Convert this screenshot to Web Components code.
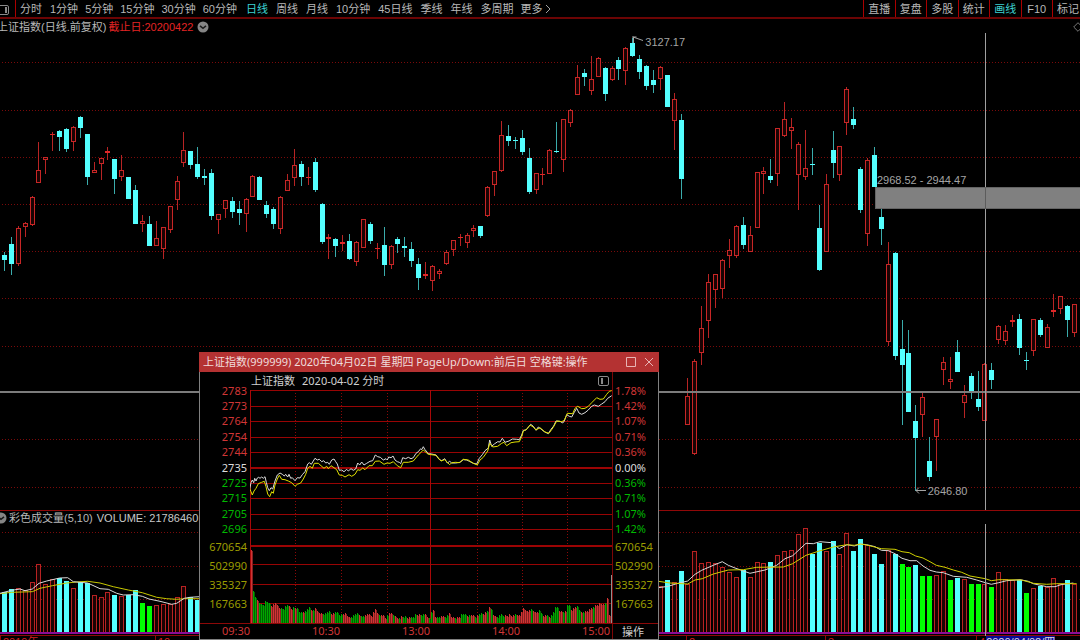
<!DOCTYPE html>
<html lang="zh-CN">
<head>
<meta charset="utf-8">
<title>上证指数 日线</title>
<style>
  html, body { margin: 0; height: 100%; background: #000; overflow: hidden; }
  body {
    --ui: "Liberation Sans", "Noto Sans CJK SC", sans-serif;
    --num: "Noto Sans", "Noto Sans CJK SC", sans-serif;
    font: 11px/16px var(--ui);
    color: #b8b8b8;
  }
</style>
</head>
<body>
<market-page></market-page>

<script>
const STEP = 6.905, FIRST = 4.4;
const columnX = i => Math.floor(FIRST + i * STEP);

/* Daily candles: direction, high, body top, body bottom, low (thirds of a pixel) */
const CANDLES = `c757 766 779 814,c712 732 792 824,r677 685 792 797,r667 668 681 711,r589 590 676 678,r427 511 548 548,
r470 471 480 521,r397 401 405 454,c391 392 410 454,c384 386 446 456,r379 381 427 454,c348 351 383 413,c403 403 532 554,
r485 511 518 518,r473 473 491 540,r441 452 458 480,c476 476 536 581,r465 511 530 543,c532 532 596 596,c554 570 671 673,
r646 664 672 695,c649 673 738 738,r663 715 738 738,r682 682 748 776,r617 619 689 698,r528 544 599 629,r397 451 488 500,
c454 454 494 507,c441 492 530 538,c507 527 535 556,c506 519 647 659,r641 641 659 703,r601 601 626 654,c592 603 635 654,
c603 627 638 676,r593 598 641 695,r526 528 590 592,c529 530 600 601,c603 614 641 654,c622 627 671 686,r587 590 686 703,
r522 541 573 573,r448 495 535 559,c484 492 530 557,r502 530 535 556,c473 487 570 575,c610 611 725 733,r703 711 718 776,
c714 717 738 770,r706 726 732 754,c703 722 777 779,r722 727 785 797,r658 658 743 743,c667 673 722 733,r728 743 748 776,
c682 736 795 827,r736 737 795 808,c711 717 733 760,c712 737 743 770,c725 746 782 800,c774 793 833 871,r787 822 827 836,
r796 797 842 873,r806 814 822 838,r749 755 792 795,r719 721 749 767,r701 711 714 739,r700 704 729 744,r676 685 692 711,
c679 679 709 713,r557 562 649 652,r514 514 554 587,r362 406 513 517,c376 408 423 437,c410 421 424 448,c391 414 457 464,
c443 473 576 581,r519 520 569 581,r505 521 526 554,r448 449 523 523,c367 452 457 459,r356 357 479 516,r328 331 369 382,
r194 230 286 286,c206 218 232 259,r169 236 272 285,r172 173 230 230,c202 203 281 302,r197 203 239 242,c172 181 207 240,
r142 143 212 256,c115 129 167 172,c164 178 216 237,c196 199 259 269,c210 240 256 280,r199 200 238 269,c226 226 322 322,
r279 298 364 451,c343 361 536 598,r1134 1189 1274 1274,r1078 1084 1363 1364,r918 985 1060 1096,r822 847 962 1014,
r823 823 870 924,r778 780 868 893,r717 751 769 803,r676 677 767 773,c652 676 736 748,r679 706 757 757,r517 517 683 683,
r500 514 523 581,c476 527 541 548,r384 385 523 559,r305 358 409 412,r353 382 394 448,r425 433 524 629,r391 505 532 540,
c443 491 494 524,c616 684 809 814,r522 552 757 757,c394 451 489 535,r438 439 524 543,r262 268 370 404,c322 356 374 386,
c500 506 629 638,r473 479 703 738,c440 464 560 560,c627 652 687 736,r725 791 1025 1037,c757 759 1067 1079,
c960 1047 1094 1274,c990 1059 1237 1237,c1215 1264 1313 1472,r1178 1191 1244 1311,c1311 1383 1432 1442,
r1256 1256 1312 1412,r1072 1087 1109 1155,r1072 1138 1147 1168,c1020 1055 1115 1115,r1155 1185 1209 1253,
c1118 1128 1175 1196,c1112 1196 1220 1232,r1090 1091 1263 1264,c1090 1110 1140 1166,r975 978 1019 1031,
r975 993 1022 1035,r946 961 965 980,c941 958 1044 1064,c1055 1080 1084 1110,r957 958 1052 1067,c953 961 1004 1012,
r971 980 1043 1045,r882 929 937 952,r887 888 926 941,c916 918 960 1011,r911 913 998 1011`
  .split(',').map(s => { s = s.trim(); return [s[0], ...s.slice(1).split(' ').map(v => v / 3)]; });

/* Volume bars: first column index, then colour and top of each bar */
const VOLUMES = [
  [0, 'c277 c268 r263 r269 r247 r193 r252 r236 c234 c243 r265 c247 c250 r284 r290 r277 c285 r288 c286 c270 g309 g319 r315 r313 r311 r290 r259 c292 c299'],
  [95, 'r259 c240 r247 c213 r252 r154 r190 r187 r190 r200 r217 r230 c211 r230 r187 r190 c187 r166 r154 r149 r103 r85 c163 c130 r152 c124 r163 r100 c153 c118 r136 c162 c191 r151 c161 g191 g202 c194 g229 g229 r225 r214 g240 c234 r238 g251 g251 r251 g262 r217 r236 r240 c240 g279 r263 c259 r262 r233 r251 c240 r252']
];

/* Polylines: origin followed by points, thirds of a pixel */
const line = (parts, color, width = 1) => {
  const pts = parts.map(([ox, oy, s]) => s.split(';').map(p => {
    const [x, y] = p.split(',').map(Number);
    return ((ox + x) / 3).toFixed(1) + ',' + ((oy + y) / 3).toFixed(1);
  }).join(' ')).join(' ');
  return `<polyline points="${pts}" fill="none" stroke="${color}" stroke-width="${width}"/>`;
};

const AVG = {
  leftWhite: '0,280;35,271;60,267;75,272;97,267;117,250;140,243;179,234;203,233;220,245;263,249;300,266;325,268;350,280;370,285;400,284;427,289;447,297;480,304;515,313;530,310;553,295;570,292;598,290',
  leftYellow: '0,281;35,277;97,275;120,265;157,257;200,249;230,246;263,244;300,249;340,260;385,270;427,278;470,292;500,296;530,298;553,296;598,296',
  midWhite: '25,263;55,259;80,251;113,243;135,223;155,211;190,196;217,185;235,196;255,204;300,220;345,210;380,196;405,176;428,167;468,130;490,131;510,125;545,128;568,146;591,134;613,138;631,132',
  midYellow: '25,244;60,249;113,252;135,240;157,236;190,222;235,210;280,209;320,202;400,201;428,191;468,166;505,154;550,141;590,134;613,136;631,132',
  endWhite: '20,134;45,140;64,151;85,152;105,161;126,175;150,182;170,182;189,198;210,211;229,216;250,218;280,229;320,232;350,240;376,248;394,253;416,248;440,242;480,239;505,244;520,251;560,260;585,260;603,254;640,249',
  endYellow: '20,135;64,146;105,148;126,155;148,158;167,168;189,174;210,185;229,196;255,202;280,210;305,217;330,228;376,236;394,242;416,239;485,240;520,250;560,253;590,251;650,251'
};

const DAY = {
  priceA: '163,438;168,413;172,405;176,413;179,400;183,408;187,399;191,397;195,400;200,396;205,400;210,395;214,412;218,428;223,437;228,428;233,432;240,408;247,390;255,384;262,388;268,393;272,388;278,396;282,388;287,400;292,398;300,407;307,398;315,399;322,389;330,380;338,357;343,353;349,358;353,351;360,340;367,345;373,343;380,350;386,347;392,354;398,352;403,358;410,345;417,342;422,350;427,357;433,376;440,375;447,380;455,373;460,378;468,371;475,376;482,372;488,354;494,360;500,351;507,360;515,355;525,349;533,347;541,330;548,335;556,337;565,345;573,341;577,345;581,336;588,338;594,333;600,345;607,350;613,352;617,356;623,338;632,341;640,337;648,341;655,338;663,325;670,320;677,311;680,314;685,305;690,314;697,322',
  priceB: '8,326;20,327;33,330;42,343;50,347;59,341;67,354;74,349;80,354;92,354;105,352;115,344;125,345;133,349;145,355;155,357;163,340;172,329;180,317;190,309;194,285;200,304;208,297;218,290;225,291;232,280;240,292;252,288;262,282;275,283;283,284;290,270;295,256;303,255;312,244;317,238;325,244;333,256;340,246;348,252;358,260;370,266;378,253;386,243;393,228;405,229;413,234;418,228;425,209;433,214;440,216;448,202;455,190;462,204;470,208;480,203;490,195;500,184;508,180;520,184;530,177;540,170;548,160;560,152',
  meanA: '163,428;168,440;172,450;177,438;183,430;190,416;200,412;208,409;213,425;218,447;224,455;230,440;235,445;240,420;247,402;253,391;260,403;270,404;280,408;290,413;300,424;307,418;317,414;325,402;332,388;338,370;345,364;352,370;358,355;370,355;378,362;387,370;395,364;400,371;408,362;417,368;425,374;433,390;442,391;450,396;462,389;470,394;480,388;488,374;495,376;503,369;510,374;522,362;532,362;541,349;553,348;567,358;576,354;585,355;595,350;607,362;617,368;625,352;640,352;655,348;670,330;680,320;685,315',
  meanB: '10,328;33,331;48,348;59,344;74,359;80,353;92,352;103,353;115,343;130,345;145,355;157,360;165,345;175,337;188,318;194,295;203,306;218,304;230,295;237,292;245,302;258,293;270,291;283,290;290,275;295,258;305,253;315,240;325,246;333,255;345,248;360,261;372,265;385,247;395,228;410,230;418,226;427,205;443,206;450,190;458,184;470,191;480,190;490,184;500,173;515,158;525,163;535,162;545,148;553,139;560,137',
  volA: '168,618;172,733;178,750;183,757;188,768;195,770;200,775;205,775;213,762;220,772;225,770;232,785;238,765;250,784;262,790;280,775;290,790;303,785;315,800;330,797;342,787;350,797;360,783;370,800;385,803;400,797;410,805;430,803;450,805;460,812;475,812;487,802;500,810;515,808;530,812;541,793;550,810;570,815;580,806;597,804;610,816;622,812;640,816;655,812;665,803;690,805;700,818',
  volB: '14,820;22,778;27,815;45,812;60,816;68,805;80,812;100,813;115,808;135,812;155,808;170,806;183,800;194,783;205,812;220,810;235,812;250,806;270,808;285,806;293,783;305,797;315,788;325,800;340,793;355,808;375,810;385,795;393,780;405,797;420,797;430,775;440,797;452,778;465,797;480,797;490,790;500,783;515,783;520,776;535,772;540,768;547,752;554,828'
};

const panelIcon = barX => `<svg width="11" height="10" viewBox="0 0 11 10" fill="none" stroke="#8a8a8a" aria-hidden="true">
  <rect x=".5" y=".5" width="10" height="9" rx="1.5"/><path d="M${barX} 2v6" stroke-width="2"/></svg>`;
const CHEVRON_ICON = `<svg width="12" height="12" viewBox="0 0 12 12" aria-hidden="true">
  <circle cx="6" cy="6" r="5.5" fill="#858585"/><path d="M3 4.800l3 2.500 3-2.500" fill="none" stroke="#1a1a1a" stroke-width="1.500"/></svg>`;

const BUTTON_CSS = `button { all: unset; box-sizing: border-box; white-space: nowrap; cursor: pointer; }`;

class View extends HTMLElement {
  constructor() {
    super();
    this.attachShadow({ mode: 'open' }).innerHTML = this.render();
  }
}

customElements.define('period-bar', class extends View {
  render() {
    const group = names => names.map(n => `<button${n === '日线' ? ' aria-pressed="true"' : ''}>${n}</button>`).join('');
    return `<style>
      :host { display: flex; gap: 8px; flex: 1; min-width: 0; overflow: hidden; }
      ${BUTTON_CSS}
      .panel { width: 16px; height: 17px; border-right: 1px solid #a00; margin-right: -4px; overflow: hidden; }
      .panel svg { display: block; margin: 3px 0 0 -2px; }
      .group { display: flex; gap: 7px; }
      .wide { gap: 8px; margin-left: 1px; }
      [aria-pressed] { color: #3cd2d2; }
      .more { display: flex; align-items: center; gap: 2px; margin-left: -1px; }
    </style>
    <button class="panel" aria-label="侧栏">${panelIcon(8)}</button>
    <div class="group">${group(['分时'])}</div>
    <div class="group">${group(['1分钟', '5分钟', '15分钟', '30分钟', '60分钟'])}</div>
    <div class="group wide">${group(['日线', '周线', '月线', '10分钟', '45日线', '季线', '年线', '多周期'])}
      <button class="more">更多<svg width="6" height="10" viewBox="0 0 6 10" fill="none" stroke="#a0a0a0"><path d="M1 1l4 4-4 4"/></svg></button>
    </div>`;
  }
});

customElements.define('tool-tabs', class extends View {
  render() {
    return `<style>
      :host { display: grid; grid-template-columns: repeat(6, 1fr) 28px; flex: 0 0 217px; }
      ${BUTTON_CSS}
      button { border-left: 1px solid #a00; text-align: center; height: 18px; overflow: hidden; }
      [aria-pressed] { color: #3cd2d2; }
      button:last-child { padding-left: 4px; text-align: left; }
    </style>
    ${['直播', '复盘', '多股', '统计', '画线', 'F10', '标记'].map(n => `<button${n === '画线' ? ' aria-pressed="true"' : ''}>${n}</button>`).join('')}`;
  }
});

customElements.define('price-pane', class extends View {
  render() {
    const grid = [62, 110, 157, 204, 251, 298, 346, 392, 439, 487]
      .map(y => `<path d="M2 ${y + .5}H1080"/>`).join('');
    const bars = CANDLES.map(([dir, ...v], i) => {
      const x = columnX(i), [h, t, b, l] = v.map(Math.round), up = dir === 'r';
      const wick = `<path d="M${x + .5} ${h}V${t}M${x + .5} ${b}V${l}" stroke="${up ? '#b82424' : '#3aacac'}"/>`;
      const body = up && b - t > 2
        ? `<rect x="${x - 1.5}" y="${t + .5}" width="4" height="${b - t - 1}" fill="#1a0303" stroke="#c82626"/>`
        : `<rect x="${x - 2}" y="${t}" width="5" height="${Math.max(1, b - t)}" fill="${up ? '#e02828' : '#54ffff'}"/>`;
      return wick + body;
    }).join('');
    return `<style>
      :host { display: grid; grid-template: minmax(0, 1fr) / minmax(0, 1fr); position: relative; min-height: 0; overflow: hidden; border-bottom: 1px solid #900808; }
      svg.plot { grid-area: 1 / 1; width: 100%; height: 100%; display: block; }
      header { grid-area: 1 / 1; align-self: start; display: flex; align-items: center; gap: 2px; margin-left: -3px; white-space: nowrap; z-index: 1; }
      .due { color: #e42424; }
      header svg:nth-of-type(1) { margin-left: 2px; }
      .mark { margin-left: auto; margin-right: -3px; }
      .note { position: absolute; color: #a4a4a4; white-space: nowrap; line-height: 12px; }
      .top { left: 59.75%; top: 3.5%; }
      .gap { left: 81.2%; top: 31.5%; }
      .low { left: 85.9%; top: 95%; }
    </style>
    <svg class="plot" viewBox="0 19 1080 491" preserveAspectRatio="none" role="img" aria-label="日线K线图">
      <g stroke="#7a0a0a" stroke-dasharray="1 2">${grid}</g>
      ${bars}
      <path d="M633.500 43V37M632 37h4.500M633 37l10 3.500" stroke="#a4a4a4" fill="none"/>
      <path d="M916 490.500h10M919 487.500l-3 3 3 3" stroke="#a4a4a4" fill="none"/>
      <rect x="875.500" y="187.500" width="206" height="21" fill="#808080" stroke="#646464"/>
      <path d="M0 392H1080" stroke="#7c7c7c" stroke-width="2"/>
      <path d="M985.500 33V187M985.500 209V510" stroke="#a0a0a0"/>
      <path d="M985.500 187v22" stroke="#5c5c5c"/>
    </svg>
    <header>
      <span>上证指数(日线.前复权)</span><span class="due">截止日:20200422</span>${CHEVRON_ICON}
      <svg class="mark" width="10" height="10" viewBox="0 0 10 10" fill="none" stroke="#777"><path d="M5 .7L9.300 5 5 9.300.7 5z"/></svg>
    </header>
    <span class="note top">3127.17</span>
    <span class="note gap">2968.52 - 2944.47</span>
    <span class="note low">2646.80</span>`;
  }
});

customElements.define('volume-pane', class extends View {
  render() {
    const base = 633;
    const bars = VOLUMES.map(([start, list]) => list.split(' ').map((s, k) => {
      const x = columnX(start + k), y = Math.round(500 + s.slice(1) / 3);
      return s[0] === 'r'
        ? `<rect x="${x - 1.5}" y="${y + .5}" width="4" height="${base - y}" fill="#1a0303" stroke="#b82222"/>`
        : `<rect x="${x - 2}" y="${y}" width="5" height="${base - y}" fill="${s[0] === 'g' ? '#00ff00' : '#54ffff'}"/>`;
    }).join('')).join('');
    return `<style>
      :host { display: grid; grid-template: minmax(0, 1fr) / minmax(0, 1fr); min-height: 0; overflow: hidden; }
      svg.plot { grid-area: 1 / 1; width: 100%; height: 100%; display: block; }
      header { grid-area: 1 / 1; align-self: start; display: flex; align-items: center; gap: 4px; margin-left: -5px; line-height: 14px; white-space: nowrap; z-index: 1; }
      header svg { margin-right: -2px; }
      .value { color: #c8c8c8; }
    </style>
    <svg class="plot" viewBox="0 511 1080 125" preserveAspectRatio="none" role="img" aria-label="成交量">
      <g stroke="#7a0a0a" stroke-dasharray="1 2"><path d="M2 532.500H1080M2 566.500H1080M2 599.500H1080"/></g>
      ${bars}
      ${line([[0, 1500, AVG.leftYellow]], '#c8c800')}
      ${line([[0, 1500, AVG.leftWhite]], '#d8d8d8')}
      ${line([[1950, 1500, AVG.midWhite], [2580, 1500, AVG.endWhite]], '#d8d8d8')}
      ${line([[1950, 1500, AVG.midYellow], [2580, 1500, AVG.endYellow]], '#d0d000')}
      <path d="M0 633H1080" stroke="#8a0c96" stroke-width="2"/>
      <path d="M0 635.500H1080" stroke="#900808"/>
      <path d="M985.500 524V636" stroke="#a0a0a0"/>
    </svg>
    <header>${CHEVRON_ICON}<span>彩色成交量(5,10)</span><span class="value">VOLUME: 21786460</span></header>`;
  }
});

customElements.define('time-axis', class extends View {
  render() {
    return `<style>
      :host { display: grid; grid-template-columns: 155fr 531fr 139fr 151fr 104fr; height: 4px; overflow: hidden; line-height: 12px; color: #d02020; }
      div { border-left: 1px solid #900808; padding-left: 2px; white-space: nowrap; overflow: hidden; height: 12px; }
      div:first-child { border: 0; padding: 0; text-indent: -3px; }
      time { display: inline-block; margin-left: 1px; background: #0a0a96; color: #d8d8d8; }
    </style>
    <div>2019年</div><div>10</div><div>2</div><div>3</div><div>4<time datetime="2020-04-02">2020/04/02/四</time></div>`;
  }
});

/* Column of scale values: ten price levels above four volume levels */
customElements.define('value-scale', class extends HTMLElement {
  connectedCallback() {
    const tone = i => i < 5 ? 'up' : i === 5 ? 'flat' : i < 10 ? 'down' : 'vol';
    const rows = this.getAttribute('values').split(' ').map((v, i) => `<span class="${tone(i)}">${v}</span>`).join('');
    this.attachShadow({ mode: 'open' }).innerHTML = `<style>
      :host { display: grid; grid-template-rows: repeat(10, minmax(0, 154fr)) repeat(4, minmax(0, 190fr)); align-items: center; padding: 11px 3px 10px; line-height: 14px; }
      .up { color: #d03636; } .flat { color: #dcdcdc; } .down { color: #00b800; } .vol { color: #9c9c00; }
    </style>${rows}`;
  }
});

customElements.define('intraday-chart', class extends View {
  render() {
    const rows = [406, 421, 437, 452, 483, 498, 514, 529, 564, 584, 603].map(y => `M250 ${y + .5}H612`).join('');
    let seed = 7;
    const rand = () => (seed = seed * 16807 % 2147483647) / 2147483647;
    const env = [[585, DAY.volA], [1275, DAY.volB]].flatMap(([ox, s]) => s.split(';').map(p => {
      const [x, y] = p.split(',').map(Number);
      return [(ox + x) / 3, 345 + y / 3];
    }));
    let bars = '', k = 0;
    for (let x = 251; x < 611; x += 2) {
      while (k < env.length - 2 && env[k + 1][0] < x) k++;
      const [x0, y0] = env[k], [x1, y1] = env[k + 1];
      const t = Math.min(1, Math.max(0, (x - x0) / (x1 - x0)));
      const y = y0 + (y1 - y0) * t + rand() * 3 - 1;
      const green = x < 272 ? rand() < .75 : x > 570 ? rand() < .15 : rand() < .45;
      const c = green ? '#00a800' : '#d03434';
      bars += `<path d="M${x + .5} 623V${y.toFixed(0)}" stroke="${c}"/><path d="M${x + 1.5} 623V${(y + 1).toFixed(0)}" stroke="${green ? '#006400' : '#842020'}"/>`;
    }
    return `<style>
      :host { display: block; min-width: 0; min-height: 0; }
      svg { display: block; width: 100%; height: 100%; }
    </style>
    <svg viewBox="250 390 362 233" preserveAspectRatio="none" role="img" aria-label="分时走势">
      <path d="M295.500 393V623M341.500 393V623M387.500 393V623M477.500 393V623M522.500 393V623M567.500 393V623" stroke="#8c0808" stroke-dasharray="1 2"/>
      <path d="${rows}M250 390.500H612" stroke="#980404"/>
      <path d="M250 468H612M250 546H612" stroke="#9c0404" stroke-width="2"/>
      <path d="M430.500 390V623M250.500 390V623" stroke="#a80808"/>
      ${bars}
      ${line([[585, 1035, DAY.priceA], [1275, 1035, DAY.priceB]], '#dcdcdc')}
      ${line([[585, 1035, DAY.meanA], [1275, 1035, DAY.meanB]], '#e0e000')}
      <path d="M611.500 575V623" stroke="#909090"/>
    </svg>`;
  }
});

customElements.define('intraday-window', class extends View {
  render() {
    return `<style>
      :host { display: flex; flex-direction: column; box-sizing: border-box; background: #000; font-family: var(--num); }
      ${BUTTON_CSS}
      .title { display: flex; align-items: center; height: 20px; padding: 0 1px 0 4px; background: #b43232; color: #f0dcdc; white-space: nowrap; }
      h1 { font: inherit; margin: 0 auto 0 0; }
      .title button { width: 18px; height: 18px; display: grid; place-items: center; }
      .body { flex: 1; min-height: 0; display: grid; grid-template: 18px minmax(0, 1fr) 16px / 50px minmax(0, 1fr) 46px; border: 1px solid #808080; border-top: 0; }
      value-scale { grid-row: 1 / 3; }
      .left { grid-column: 1; text-align: right; }
      .right { grid-column: 3; border-left: 1px solid #7c0606; padding-left: 2px; }
      .head { grid-area: 1 / 2; display: flex; align-items: center; gap: 7px; padding: 0 3px 0 1px; color: #d0d0d0; }
      .head button { margin-left: auto; height: 10px; }
      .head svg { display: block; }
      intraday-chart { grid-area: 2 / 2; }
      .times { grid-area: 3 / 1 / 4 / 3; display: flex; justify-content: space-between; padding: 0 2px 0 22px; border-top: 1px solid #8c0808; color: #d03636; line-height: 14px; }
      .act { grid-area: 3 / 3; border-top: 1px solid #8c0808; border-left: 1px solid #7c0606; padding-left: 9px; line-height: 14px; color: #d0d0d0; }
    </style>
    <div class="title">
      <h1>上证指数(999999) 2020年04月02日 星期四 PageUp/Down:前后日 空格键:操作</h1>
      <button aria-label="最大化"><svg width="10" height="10" fill="none" stroke="#e8b4b4"><path d="M.5.5h9v9h-9z"/></svg></button>
      <button aria-label="关闭"><svg width="10" height="10" fill="none" stroke="#e8b4b4"><path d="M1 1l8 8M9 1l-8 8"/></svg></button>
    </div>
    <div class="body">
      <value-scale class="left" values="2783 2773 2764 2754 2744 2735 2725 2715 2705 2696 670654 502990 335327 167663"></value-scale>
      <div class="head"><span>上证指数</span><span>2020-04-02 分时</span><button aria-label="侧栏">${panelIcon(4)}</button></div>
      <value-scale class="right" values="1.78% 1.42% 1.07% 0.71% 0.36% 0.00% 0.36% 0.71% 1.07% 1.42% 670654 502990 335327 167663"></value-scale>
      <intraday-chart></intraday-chart>
      <div class="times"><span>09:30</span><span>10:30</span><span>13:00</span><span>14:00</span><span>15:00</span></div>
      <button class="act">操作</button>
    </div>`;
  }
});

customElements.define('market-page', class extends View {
  render() {
    return `<style>
      :host { display: grid; grid-template: 19px minmax(0, 1fr) 125px 4px / minmax(0, 1fr); height: 100vh; position: relative; overflow: hidden; background: #000; }
      nav { display: flex; justify-content: space-between; box-sizing: border-box; border-bottom: 2px solid #6c0404; min-width: 0; overflow: hidden; }
      intraday-window { position: absolute; left: 199px; bottom: 0; width: 460px; height: 288px; z-index: 2; }
    </style>
    <nav><period-bar></period-bar><tool-tabs></tool-tabs></nav>
    <price-pane></price-pane>
    <volume-pane></volume-pane>
    <time-axis></time-axis>
    <intraday-window></intraday-window>`;
  }
});
</script>
</body>
</html>
